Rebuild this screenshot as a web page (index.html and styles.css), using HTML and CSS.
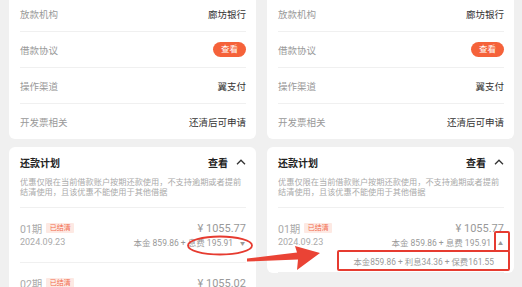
FILE: index.html
```html
<!DOCTYPE html>
<html lang="zh-CN">
<head>
<meta charset="UTF-8">
<meta name="viewport" content="width=device-width">
<title>还款计划</title>
<link rel="stylesheet" href="styles.css">
</head>
<body>
<div class="wrap">
    <!-- left: collapsed -->
    <div class="col">
        <div class="card info">
            <div class="row"><span class="k">放款机构</span><span class="v">廊坊银行</span></div>
            <div class="row"><span class="k">借款协议</span><span class="pill">查看</span></div>
            <div class="row"><span class="k">操作渠道</span><span class="v">翼支付</span></div>
            <div class="row"><span class="k">开发票相关</span><span class="v">还清后可申请</span></div>
        </div>
        <div class="card plan">
            <div class="hd">
                <span class="ttl">还款计划</span>
                <span class="more">查看<svg class="chev" viewBox="0 0 10 6" width="10" height="6"><path d="M1 5.2 5 1.2 9 5.2" fill="none" stroke="#333" stroke-width="1.3"/></svg></span>
            </div>
            <p class="tip">优惠仅限在当前借款账户按期还款使用，不支持逾期或者提前结清使用，且该优惠不能使用于其他借据</p>
            <div class="item">
                <div class="line">
                    <span class="no">01期<em class="tag">已结清</em></span>
                    <span class="amt">¥ 1055.77</span>
                </div>
                <div class="line sub">
                    <span class="date">2024.09.23</span>
                    <span class="brk">本金 859.86 + 息费 195.91<i class="tri">▼</i></span>
                </div>
            </div>
            <div class="item">
                <div class="line">
                    <span class="no">02期<em class="tag">已结清</em></span>
                    <span class="amt">¥ 1055.02</span>
                </div>
            </div>
        </div>
    </div>

    <!-- right: expanded -->
    <div class="col">
        <div class="card info">
            <div class="row"><span class="k">放款机构</span><span class="v">廊坊银行</span></div>
            <div class="row"><span class="k">借款协议</span><span class="pill">查看</span></div>
            <div class="row"><span class="k">操作渠道</span><span class="v">翼支付</span></div>
            <div class="row"><span class="k">开发票相关</span><span class="v">还清后可申请</span></div>
        </div>
        <div class="card plan">
            <div class="hd">
                <span class="ttl">还款计划</span>
                <span class="more">查看<svg class="chev" viewBox="0 0 10 6" width="10" height="6"><path d="M1 5.2 5 1.2 9 5.2" fill="none" stroke="#333" stroke-width="1.3"/></svg></span>
            </div>
            <p class="tip">优惠仅限在当前借款账户按期还款使用，不支持逾期或者提前结清使用，且该优惠不能使用于其他借据</p>
            <div class="item open">
                <div class="line">
                    <span class="no">01期<em class="tag">已结清</em></span>
                    <span class="amt">¥ 1055.77</span>
                </div>
                <div class="line sub">
                    <span class="date">2024.09.23</span>
                    <span class="brk">本金 859.86 + 息费 195.91<i class="tri">▲</i></span>
                </div>
                <div class="detail">本金859.86 + 利息34.36 + 保费161.55</div>
            </div>
        </div>
    </div>
</div>

<!-- red annotations -->
<svg class="marks" viewBox="0 0 522 287" width="522" height="287">
    <ellipse cx="220" cy="245.5" rx="32" ry="9" fill="none" stroke="#e63b30" stroke-width="1.8"/>
    <polygon points="247,258.5 297,252.5 295,246 320,253 297,270 298,259.5 247,261.5" fill="#ea4335"/>
    <rect x="495" y="232" width="14" height="19" rx="1" fill="none" stroke="#e63b30" stroke-width="2"/>
    <rect x="338" y="251" width="171" height="19" rx="1" fill="none" stroke="#e63b30" stroke-width="2"/>
</svg>
</body>
</html>
```

FILE: styles.css
```css
*{margin:0;padding:0;box-sizing:border-box}
body{background:#f0f0f0;width:522px;height:287px;overflow:hidden;position:relative;font-family:Roboto,"Noto Sans CJK SC",sans-serif;color:#333}

.wrap{display:flex;gap:11px;padding:0 8px 0 9px}
.col{width:247px;display:flex;flex-direction:column;gap:8px}
.card{background:#fff;border-radius:6px;padding:0 10px 0 11px}

/* info card */
.info{margin-top:-4px;border-radius:0 0 6px 6px}
.row{height:36px;display:flex;align-items:center;justify-content:space-between;border-bottom:1px solid #f0f0f0;font-size:9.5px}
.row:last-child{border-bottom:0;height:35px}
.k{color:#999}
.v{color:#333}
.pill{background:#f5623a;color:#fff;font-size:8.5px;line-height:15px;width:33px;text-align:center;border-radius:8px}

/* plan card */
.hd{height:30px;display:flex;align-items:center;justify-content:space-between}
.ttl{font-size:10px;font-weight:700;color:#222}
.more{font-size:10px;font-weight:700;color:#222;display:flex;align-items:center;gap:8px}
.chev{display:block}
.tip{font-size:8.2px;line-height:10px;color:#aaa;padding-bottom:10px;border-bottom:1px solid #f0f0f0}

.item{padding:13px 0;border-bottom:1px solid #f0f0f0}
.item.open{padding-bottom:3px}
.line{height:14px;display:flex;align-items:center;justify-content:space-between}
.no{font-size:10.5px;color:#aaa;display:flex;align-items:center;gap:4px}
.tag{font-style:normal;font-size:7px;color:#f26b4c;background:#fde9e3;width:28px;line-height:10px;text-align:center;border-radius:1px}
.amt{font-size:11px;color:#999}
.date{font-size:9px;color:#aaa}
.brk{font-size:8.5px;color:#999;display:flex;align-items:center}
.tri{font-style:normal;font-size:5px;color:#999;margin-left:7px;width:6px}
.detail{height:14px;margin-top:6px;font-size:8.4px;line-height:14px;color:#999;text-align:right;padding-right:10px}

.marks{position:absolute;left:0;top:0;pointer-events:none}
```
